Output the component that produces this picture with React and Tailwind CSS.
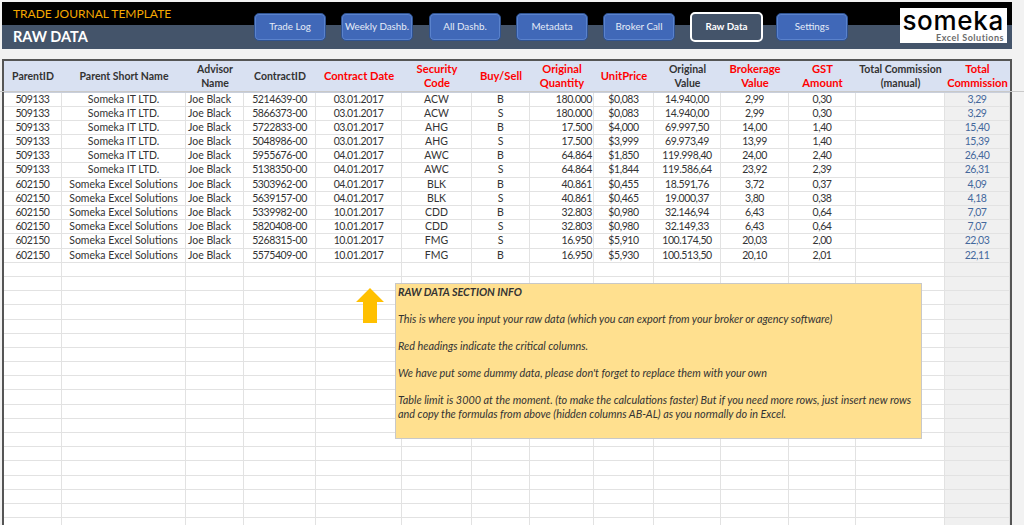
const columns = [58, 124, 58, 72, 86, 70, 58, 64, 60, 67, 68, 67, 89, 65];

const headers = [
  { lines: ['ParentID'] },
  { lines: ['Parent Short Name'] },
  { lines: ['Advisor', 'Name'] },
  { lines: ['ContractID'] },
  { lines: ['Contract Date'], red: true },
  { lines: ['Security', 'Code'], red: true },
  { lines: ['Buy/Sell'], red: true },
  { lines: ['Original', 'Quantity'], red: true },
  { lines: ['UnitPrice'], red: true },
  { lines: ['Original', 'Value'] },
  { lines: ['Brokerage', 'Value'], red: true },
  { lines: ['GST', 'Amount'], red: true },
  { lines: ['Total Commission', '(manual)'] },
  { lines: ['Total', 'Commission'], red: true },
];

const it = ['509133', 'Someka IT LTD.', 'Joe Black'];
const ex = ['602150', 'Someka Excel Solutions', 'Joe Black'];

const rows = [
  [...it, '5214639-00', '03.01.2017', 'ACW', 'B', '180.000', '$0,083', '14.940,00', '2,99', '0,30', '', '3,29'],
  [...it, '5866373-00', '03.01.2017', 'ACW', 'S', '180.000', '$0,083', '14.940,00', '2,99', '0,30', '', '3,29'],
  [...it, '5722833-00', '03.01.2017', 'AHG', 'B', '17.500', '$4,000', '69.997,50', '14,00', '1,40', '', '15,40'],
  [...it, '5048986-00', '03.01.2017', 'AHG', 'S', '17.500', '$3,999', '69.973,49', '13,99', '1,40', '', '15,39'],
  [...it, '5955676-00', '04.01.2017', 'AWC', 'B', '64.864', '$1,850', '119.998,40', '24,00', '2,40', '', '26,40'],
  [...it, '5138350-00', '04.01.2017', 'AWC', 'S', '64.864', '$1,844', '119.586,64', '23,92', '2,39', '', '26,31'],
  [...ex, '5303962-00', '04.01.2017', 'BLK', 'B', '40.861', '$0,455', '18.591,76', '3,72', '0,37', '', '4,09'],
  [...ex, '5639157-00', '04.01.2017', 'BLK', 'S', '40.861', '$0,465', '19.000,37', '3,80', '0,38', '', '4,18'],
  [...ex, '5339982-00', '10.01.2017', 'CDD', 'B', '32.803', '$0,980', '32.146,94', '6,43', '0,64', '', '7,07'],
  [...ex, '5820408-00', '10.01.2017', 'CDD', 'S', '32.803', '$0,980', '32.149,33', '6,43', '0,64', '', '7,07'],
  [...ex, '5268315-00', '10.01.2017', 'FMG', 'S', '16.950', '$5,910', '100.174,50', '20,03', '2,00', '', '22,03'],
  [...ex, '5575409-00', '10.01.2017', 'FMG', 'B', '16.950', '$5,930', '100.513,50', '20,10', '2,01', '', '22,11'],
];

const emptyRows = Array.from({ length: 19 }, () => Array(14).fill(''));

const buttons = [
  { label: 'Trade Log', gap: 'mr-[15px]' },
  { label: 'Weekly Dashb.', gap: 'mr-[16px]' },
  { label: 'All Dashb.', gap: 'mr-[15px]' },
  { label: 'Metadata', gap: 'mr-[15px]' },
  { label: 'Broker Call', gap: 'mr-[15px]' },
  { label: 'Raw Data', active: true, gap: 'mr-[13px]' },
  { label: 'Settings', gap: '' },
];

function cellClass(col) {
  if (col === 1 || col === 5 || col === 6) return 'text-center';
  if (col === 2) return 'text-left pl-[2px]';
  if (col === 7) return 'text-right pr-[1px] tracking-[-0.4px] [font-kerning:none]';
  if (col === 13) return 'text-center tracking-[-0.4px] [font-kerning:none] text-[#44689c] bg-[#f0f0f0]';
  return 'text-center tracking-[-0.4px] [font-kerning:none]';
}

function Row({ cells }) {
  return (
    <div className="flex h-[14.2px] border-b border-[#e2e2e2]">
      {cells.map((text, i) => (
        <div
          key={i}
          style={{ width: columns[i] }}
          className={`shrink-0 leading-[13px] whitespace-nowrap border-r border-[#e2e2e2] ${cellClass(i)}`}
        >
          {text}
        </div>
      ))}
    </div>
  );
}

function NavButton({ label, active, gap }) {
  if (active) {
    return (
      <div className={`w-[73px] h-[30px] rounded-[5px] border-2 border-white bg-[#44546a] text-white font-bold flex items-center justify-center ${gap}`}>
        {label}
      </div>
    );
  }
  return (
    <div className={`w-[72px] h-[28px] rounded-[5px] border border-[#2f528f] bg-[#4068b8] shadow-[inset_0_0_0_1px_#5a82cc] text-[#e4ebf7] flex items-center justify-center whitespace-nowrap ${gap}`}>
      {label}
    </div>
  );
}

function Logo() {
  return (
    <div className="w-[107px] h-[35px] bg-white flex flex-col items-end pr-[3px] shrink-0 font-['Inter',sans-serif]">
      <div className="text-black text-[26px] leading-[25px] tracking-[0.7px] h-[25px] font-medium">someka</div>
      <div className="text-[#6b6b6b] text-[9px] leading-[9px] font-bold tracking-[0.5px] font-['Lato',sans-serif]">Excel Solutions</div>
    </div>
  );
}

export default function App() {
  return (
    <div className="w-[1024px] h-[525px] overflow-hidden bg-[#f2f2f2] text-[#333333] text-[10.5px] font-['Lato','Open_Sans',sans-serif] pt-[2px]">
      <header className="ml-[2px] w-[1010px] h-[47px] flex items-center bg-[linear-gradient(#000000_49%,#44546a_49%)]">
        <div className="w-[252px] pl-[11px] shrink-0">
          <div className="text-[#f5a800] text-[12px] leading-[20px] mt-[1px]">TRADE JOURNAL TEMPLATE</div>
          <div className="text-white text-[14.5px] leading-[24px] font-bold mt-[1px]">RAW DATA</div>
        </div>
        <nav className="flex items-center text-[9.8px] mt-[2px]">
          {buttons.map((b) => (
            <NavButton key={b.label} {...b} />
          ))}
        </nav>
        <div className="ml-auto mr-[5px]">
          <Logo />
        </div>
      </header>

      <main className="relative mt-[10px] ml-[2px] w-[1010px] h-[466px] bg-white border-x-2 border-t-2 border-[#555555]">
        <div className="flex h-[31.5px] bg-[#d9e1f2] border-b-2 border-[#c9cfdb] font-bold">
          {headers.map((h, i) => (
            <div
              key={h.lines.join(' ')}
              style={{ width: columns[i] }}
              className={`shrink-0 flex flex-col items-center justify-center text-center leading-[14px] whitespace-nowrap ${h.red ? 'text-[#ff0000] text-[11.2px]' : 'text-[#333333]'}`}
            >
              {h.lines.map((line) => (
                <span key={line}>{line}</span>
              ))}
            </div>
          ))}
        </div>
        {rows.map((cells, i) => (
          <Row key={i} cells={cells} />
        ))}
        {emptyRows.map((cells, i) => (
          <Row key={i} cells={cells} />
        ))}

        <div className="absolute top-[30px] -left-[4px] -right-[14px] h-px bg-[#c9c9c9]" />

        <svg viewBox="0 0 28 35" className="absolute left-[352px] top-[227px] w-[28px] h-[35px]">
          <path d="M14 0 L28 14 L21 14 L21 35 L7 35 L7 14 L0 14 Z" fill="#ffc000" />
        </svg>

        <div className="absolute left-[391px] top-[222px] w-[527px] h-[156px] bg-[#ffe08f] border border-[#c8c8c8] pl-[2px] pt-[1px] italic text-[10.85px] leading-[13.5px] text-[#333333]">
          <p className="font-bold">RAW DATA SECTION INFO</p>
          <p className="mt-[13.5px]">This is where you input your raw data (which you can export from your broker or agency software)</p>
          <p className="mt-[13.5px]">Red headings indicate the critical columns.</p>
          <p className="mt-[13.5px]">We have put some dummy data, please don't forget to replace them with your own</p>
          <p className="mt-[13.5px]">Table limit is 3000 at the moment. (to make the calculations faster) But if you need more rows, just insert new rows<br />and copy the formulas from above (hidden columns AB-AL) as you normally do in Excel.</p>
        </div>
      </main>
    </div>
  );
}
